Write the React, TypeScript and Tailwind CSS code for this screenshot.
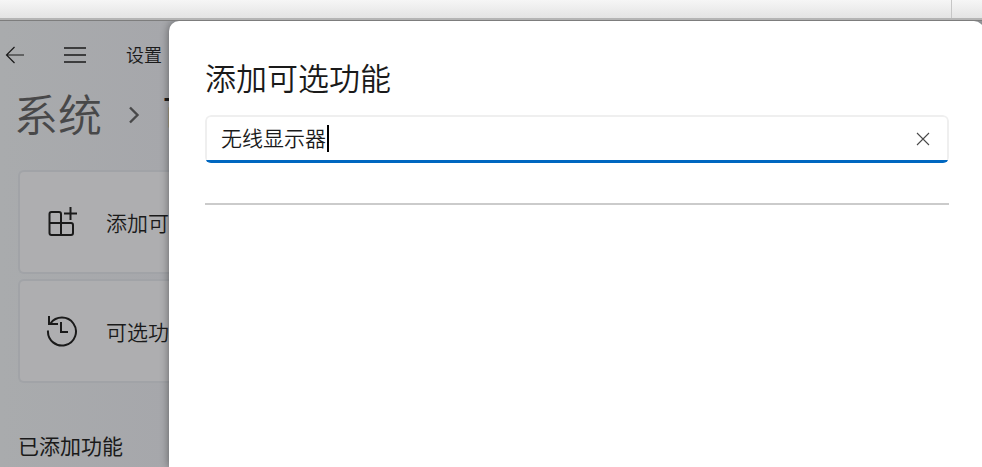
import React, { useState } from 'react'

const BackIcon = () => (
  <svg className="h-5 w-5" viewBox="0 0 20 20" fill="none" stroke="currentColor" strokeWidth="1.2">
    <path d="M19 10H1.5M9.5 2L1.5 10l8 8" />
  </svg>
)

const MenuIcon = () => (
  <svg className="h-5 w-6" viewBox="0 0 24 20" fill="none" stroke="currentColor" strokeWidth="1.4">
    <path d="M1 3h22M1 10h22M1 17h22" />
  </svg>
)

const ChevronIcon = () => (
  <svg className="h-5 w-3" viewBox="0 0 12 20" fill="none" stroke="currentColor" strokeWidth="2.4">
    <path d="M2 2.5l7.5 7.5L2 17.5" />
  </svg>
)

const AddFeatureIcon = () => (
  <svg className="h-8 w-8" viewBox="0 0 32 32" fill="none" stroke="currentColor" strokeWidth="2">
    <path d="M15 17V8a2 2 0 0 0-2-2H5.500a2 2 0 0 0-2 2v19a2 2 0 0 0 2 2h19.500a2 2 0 0 0 2-2v-8a2 2 0 0 0-2-2H3.500M15 17v12" />
    <path d="M24.500 1v13M18 7.500h13" />
  </svg>
)

const HistoryIcon = () => (
  <svg className="h-8 w-8" viewBox="0 0 32 32" fill="none" stroke="currentColor" strokeWidth="2">
    <path d="M2 15.5A14 14 0 1 0 4.5 8.5M3 1v8h9" />
    <path d="M15 7v10h7" />
  </svg>
)

const ClearIcon = () => (
  <svg className="h-4 w-4" viewBox="0 0 16 16" fill="none" stroke="currentColor" strokeWidth="1.1">
    <path d="M2 2l12 12M14 2L2 14" />
  </svg>
)

type SettingCardProps = {
  icon: React.ReactNode
  label: string
}

const SettingCard = ({ icon, label }: SettingCardProps) => (
  <button
    type="button"
    className="flex h-[104px] w-full items-center gap-7 rounded-l-md border-2 border-r-0 border-[#a1a3a7] bg-[#aeaeb0] pl-[26px] text-left text-[21px] whitespace-nowrap"
  >
    <span className="shrink-0">{icon}</span>
    <span className="pt-0.5">{label}</span>
  </button>
)

const App = () => {
  const [query, setQuery] = useState('无线显示器')

  return (
    <div className="flex min-h-screen flex-col overflow-hidden bg-[#a7a9ad] font-['Noto_Sans_CJK_SC',sans-serif] font-[350] text-[#1a1a1a]">
      <div className="flex h-[18px] justify-end bg-linear-to-b from-[#f6f6f6] to-[#e4e4e4]">
        <div className="w-[31px] border-l border-[#c6c6c6]" />
      </div>
      <div className="h-[3px] border-b border-[#7d7d7d] bg-[#b5b5b5]" />

      <div className="flex flex-1 overflow-hidden">
        <main className="w-[169px] shrink-0 overflow-hidden bg-linear-to-r from-[#a9abad] to-[#a6a7ab]">
          <header className="flex h-[68px] items-center pl-[5px] text-lg whitespace-nowrap">
            <button type="button" aria-label="返回">
              <BackIcon />
            </button>
            <button type="button" aria-label="菜单" className="ml-[38px]">
              <MenuIcon />
            </button>
            <span className="ml-[39px] pb-0.5">设置</span>
          </header>

          <nav className="flex h-[52px] items-center pl-[14px] text-[44px] leading-[52px] whitespace-nowrap">
            <a href="#system" className="pb-1 text-[#484849]">
              系统
            </a>
            <span className="ml-[26px] shrink-0 text-[#484849]">
              <ChevronIcon />
            </span>
            <span className="ml-[22px] pb-1">可</span>
          </nav>

          <div className="mt-[29px] flex flex-col gap-[5px] pl-[18px]">
            <SettingCard icon={<AddFeatureIcon />} label="添加可" />
            <SettingCard icon={<HistoryIcon />} label="可选功" />
          </div>

          <h2 className="mt-[46px] pl-[18px] text-[21px] leading-8 font-normal whitespace-nowrap">
            已添加功能
          </h2>
        </main>

        <section
          role="dialog"
          aria-labelledby="dialog-title"
          className="z-10 -mr-0.5 flex-1 rounded-t-[10px] bg-white pt-9 pr-[35px] pl-9 shadow-[0_0_8px_rgba(0,0,0,0.45)]"
        >
          <h1 id="dialog-title" className="text-[31px] leading-10">
            添加可选功能
          </h1>

          <div className="mt-[18px] overflow-hidden rounded-md">
            <div className="flex h-[45px] items-center rounded-t-md border-2 border-b-0 border-[#efefef] pr-4 pl-[14px]">
              <div className="relative flex-1">
                <input
                  type="text"
                  aria-label="查找可用的可选功能"
                  value={query}
                  onChange={(e) => setQuery(e.target.value)}
                  className="block w-full pb-[3px] text-[21px] leading-8 caret-transparent outline-none"
                />
                <span className="absolute top-1 left-[106px] h-[27px] w-0.5 bg-black" />
              </div>
              <button
                type="button"
                aria-label="清除"
                onClick={() => setQuery('')}
                className="text-[#4a4a4a]"
              >
                <ClearIcon />
              </button>
            </div>
            <div className="h-[3px] bg-[#0067c0]" />
          </div>

          <hr className="mt-10 border-t-2 border-[#cbcbcb]" />
        </section>
      </div>
    </div>
  )
}

export default App
